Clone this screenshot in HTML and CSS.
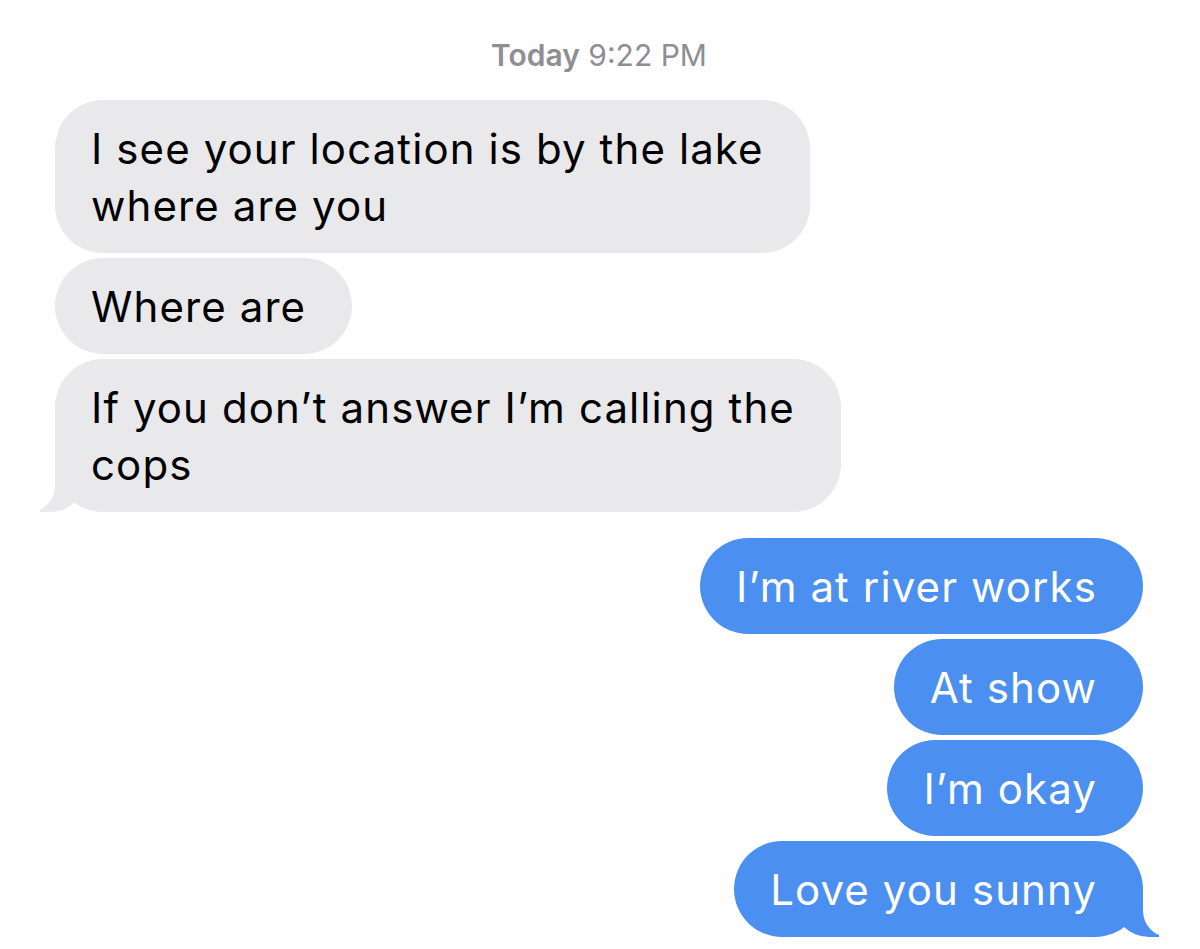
FILE: index.html
```html
<!DOCTYPE html>
<html lang="en">
<head>
<meta charset="UTF-8">
<meta name="viewport" content="width=device-width, initial-scale=1.0">
<title>Messages</title>
<link rel="stylesheet" href="styles.css">
</head>
<body>
<div class="thread">
  <div class="stamp"><b>Today</b> 9:22 PM</div>

  <div class="group them">
    <div class="msg">I see your location is by the lake<br>where are you</div>
    <div class="msg">Where are</div>
    <div class="msg tail">If you don’t answer I’m calling the<br>cops</div>
  </div>

  <div class="group me">
    <div class="msg">I’m at river works</div>
    <div class="msg">At show</div>
    <div class="msg">I’m okay</div>
    <div class="msg tail">Love you sunny</div>
  </div>
</div>
</body>
</html>
```

FILE: styles.css
```css
*{
  margin: 0;
  padding: 0;
  box-sizing: border-box;
}
body{
  background-color: #fff;
  font-family: Inter, "Liberation Sans", sans-serif;
}
.thread{
  padding: 37px 57px 0 55px;
}
.stamp{
  text-align: center;
  font-size: 30px;
  line-height: 36px;
  color: #8e8e93;
  margin-bottom: 27px;

  b{
    font-weight: 600;
  }
}
.group{
  display: flex;
  flex-direction: column;
  gap: 5px;
}
.them{
  align-items: flex-start;
}
.me{
  align-items: flex-end;
  margin-top: 26px;
}
.msg{
  position: relative;
  max-width: 1000px;
  white-space: nowrap;
  padding: 19.5px 46px 19.5px 36px;
  border-radius: 48px;
  font-size: 42px;
  line-height: 57px;
  letter-spacing: 1.1px;
}
.them .msg{
  background-color: #e9e9eb;
  color: #000;
}
.me .msg{
  background-color: #4b8ff0;
  color: #fff;
}

/* bubble tails */
.msg.tail::before,
.msg.tail::after{
  content: "";
  position: absolute;
  bottom: 0;
  height: 50px;
}
.them .tail::before{
  left: -15px;
  width: 46px;
  background-color: #e9e9eb;
  border-bottom-right-radius: 36px;
}
.them .tail::after{
  left: -56px;
  width: 56px;
  background-color: #fff;
  border-bottom-right-radius: 26px;
}
.me .tail::before{
  right: -16px;
  width: 46px;
  background-color: #4b8ff0;
  border-bottom-left-radius: 36px;
}
.me .tail::after{
  right: -57px;
  width: 57px;
  background-color: #fff;
  border-bottom-left-radius: 26px;
}
```
